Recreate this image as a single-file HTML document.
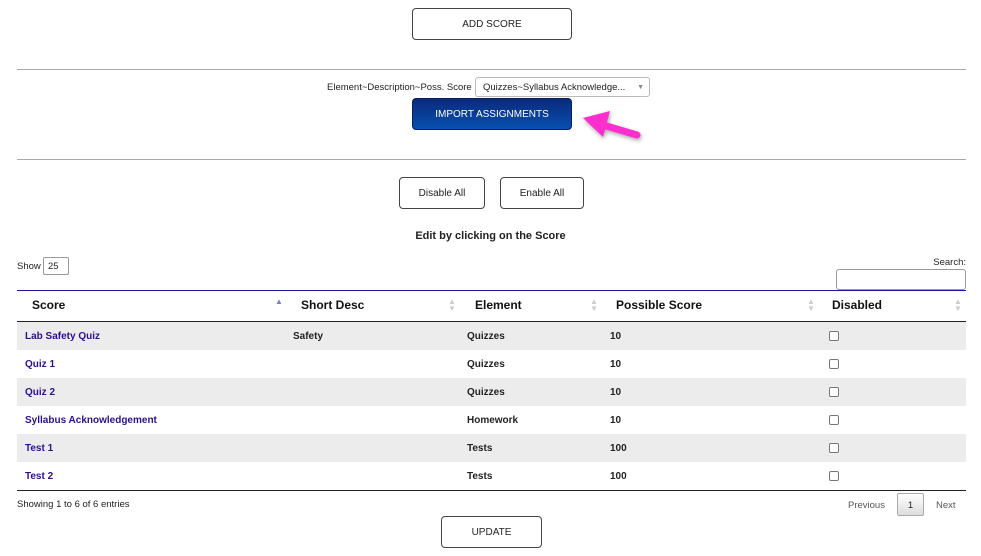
<!DOCTYPE html>
<html><head><style>
body{margin:0;width:981px;height:556px;background:#fff;font-family:"Liberation Sans",sans-serif;position:relative;overflow:hidden;color:#222}
.a{position:absolute}
.btn{position:absolute;border:1px solid #444;border-radius:4px;background:#fff;font-size:10px;display:flex;align-items:center;justify-content:center;box-sizing:border-box;color:#222}
.hr{position:absolute;left:17px;width:949px;height:1px;background:#aaa}
.row{position:absolute;left:17px;width:949px;height:28px;font-size:10px;font-weight:bold}
.row span{position:absolute;top:9px}
.g{background:#ececec}
.l{color:#2b1090}
.cb{position:absolute;left:812px;top:9px;width:8px;height:8px;border:1px solid #777;border-radius:2px;background:#fff}
.th{position:absolute;top:298px;font-size:12px;font-weight:bold;color:#111}
.ar{position:absolute;top:298px;font-size:8px;color:#ccc;line-height:7px}
</style></head><body>
<div class="btn" style="left:412px;top:8px;width:160px;height:32px">ADD SCORE</div>
<div class="hr" style="top:69px"></div>
<div class="a" style="left:327px;top:82px;font-size:9.5px">Element~Description~Poss. Score</div>
<div class="a" style="left:475px;top:77px;width:175px;height:20px;border:1px solid #bbb;border-radius:3px;box-sizing:border-box;font-size:9.5px;padding:4px 0 0 7px">Quizzes~Syllabus Acknowledge...<span style="position:absolute;right:5px;top:6px;font-size:7px;color:#888">▼</span></div>
<div class="a" style="left:412px;top:98px;width:160px;height:32px;border-radius:4px;background:linear-gradient(#0a2a7a,#0850b0);border:1px solid #0a2060;box-sizing:border-box;color:#fff;font-size:10px;display:flex;align-items:center;justify-content:center">IMPORT ASSIGNMENTS</div>
<svg class="a" style="left:575px;top:105px" width="80" height="45"><g filter="drop-shadow(1px 2px 2px rgba(0,0,0,.35))"><path d="M62 30 L28 20" stroke="#ff2ecf" stroke-width="7" stroke-linecap="round"/><path d="M8 13 L35 6 L28 32 Z" fill="#ff2ecf"/></g></svg>
<div class="hr" style="top:159px"></div>
<div class="btn" style="left:399px;top:177px;width:86px;height:32px">Disable All</div>
<div class="btn" style="left:500px;top:177px;width:84px;height:32px">Enable All</div>
<div class="a" style="left:0;width:981px;text-align:center;top:230px;font-size:11px;font-weight:bold">Edit by clicking on the Score</div>
<div class="a" style="left:17px;top:261px;font-size:9.5px">Show</div>
<div class="a" style="left:43px;top:257px;width:26px;height:18px;border:1px solid #999;border-radius:2px;box-sizing:border-box;font-size:9.5px;padding:3px 0 0 4px">25</div>
<div class="a" style="right:15px;top:257px;font-size:9.5px">Search:</div>
<div class="a" style="left:836px;top:269px;width:130px;height:21px;border:1px solid #999;border-radius:3px;box-sizing:border-box"></div>
<div class="a" style="left:17px;top:290px;width:949px;height:1px;background:#1a1aa0"></div>
<div class="th" style="left:32px">Score</div><div class="ar" style="left:275px;color:#7a7ad0">▲</div>
<div class="th" style="left:301px">Short Desc</div><div class="ar" style="left:448px">▲<br>▼</div>
<div class="th" style="left:475px">Element</div><div class="ar" style="left:590px">▲<br>▼</div>
<div class="th" style="left:616px">Possible Score</div><div class="ar" style="left:807px">▲<br>▼</div>
<div class="th" style="left:832px">Disabled</div><div class="ar" style="left:954px">▲<br>▼</div>
<div class="a" style="left:17px;top:321px;width:949px;height:1px;background:#222"></div>
<div class="row g" style="top:322px"><span class="l" style="left:8px">Lab Safety Quiz</span><span style="left:276px">Safety</span><span style="left:450px">Quizzes</span><span style="left:593px">10</span><i class="cb"></i></div>
<div class="row" style="top:350px"><span class="l" style="left:8px">Quiz 1</span><span style="left:450px">Quizzes</span><span style="left:593px">10</span><i class="cb"></i></div>
<div class="row g" style="top:378px"><span class="l" style="left:8px">Quiz 2</span><span style="left:450px">Quizzes</span><span style="left:593px">10</span><i class="cb"></i></div>
<div class="row" style="top:406px"><span class="l" style="left:8px">Syllabus Acknowledgement</span><span style="left:450px">Homework</span><span style="left:593px">10</span><i class="cb"></i></div>
<div class="row g" style="top:434px"><span class="l" style="left:8px">Test 1</span><span style="left:450px">Tests</span><span style="left:593px">100</span><i class="cb"></i></div>
<div class="row" style="top:462px"><span class="l" style="left:8px">Test 2</span><span style="left:450px">Tests</span><span style="left:593px">100</span><i class="cb"></i></div>
<div class="a" style="left:17px;top:490px;width:949px;height:1px;background:#222"></div>
<div class="a" style="left:17px;top:499px;font-size:9.5px">Showing 1 to 6 of 6 entries</div>
<div class="a" style="left:848px;top:500px;font-size:9.5px;color:#555">Previous</div>
<div class="a" style="left:897px;top:493px;width:27px;height:23px;border:1px solid #aaa;border-radius:2px;background:linear-gradient(#fff,#ddd);box-sizing:border-box;font-size:9.5px;text-align:center;padding-top:6px">1</div>
<div class="a" style="left:936px;top:500px;font-size:9.5px;color:#555">Next</div>
<div class="btn" style="left:441px;top:516px;width:101px;height:32px">UPDATE</div>
</body></html>
